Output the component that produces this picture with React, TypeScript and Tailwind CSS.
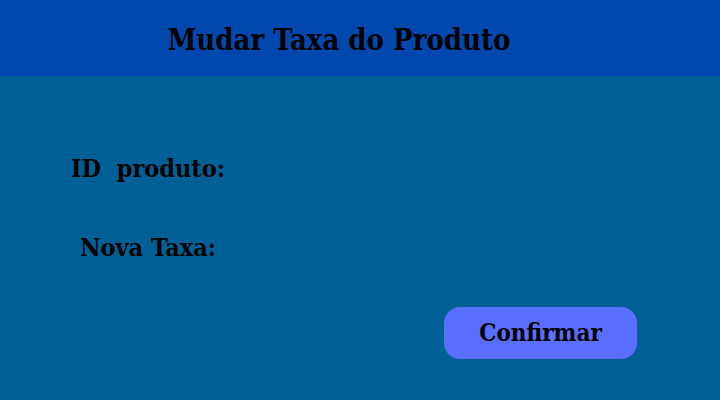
export default function App() {
  const font = { fontFamily: '"DejaVu Serif Condensed", "DejaVu Serif", "Liberation Serif", serif' };
  return (
    <div className="w-[720px] h-[400px] bg-[#006096] flex flex-col text-black" style={font}>
      <div className="h-[76px] bg-[#0048ae] flex items-center justify-center pr-[42px] pt-[4px]">
        <h1 className="text-[29px] leading-none font-bold">Mudar Taxa do Produto</h1>
      </div>
      <div className="flex flex-col pt-[78px]">
        <div className="w-[296px] flex justify-center h-[28px] items-center">
          <span className="text-[25px] leading-none whitespace-pre font-bold">ID  produto:</span>
        </div>
        <div className="w-[296px] flex justify-center h-[28px] items-center mt-[51px]">
          <span className="text-[25px] leading-none font-bold">Nova Taxa:</span>
        </div>
        <div className="flex pl-[444px] mt-[46px]">
          <button className="w-[193px] h-[52px] rounded-[16px] bg-[#5a6eff] flex items-center justify-center text-[24px] leading-none font-bold">
            Confirmar
          </button>
        </div>
      </div>
    </div>
  );
}
